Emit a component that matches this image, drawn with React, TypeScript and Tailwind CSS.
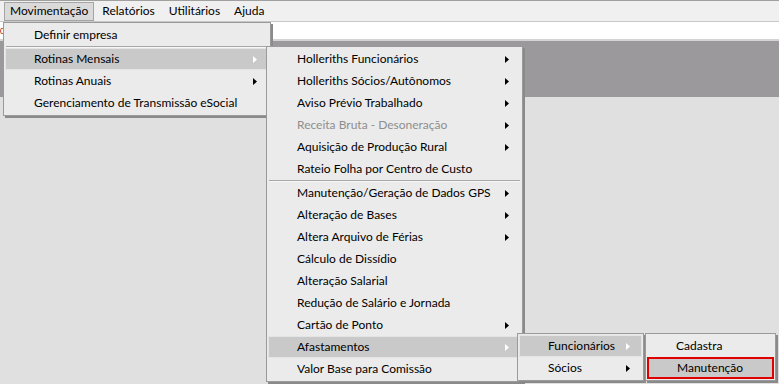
import React from 'react';

type Item = {
  label?: string;
  sub?: boolean;
  active?: boolean;
  disabled?: boolean;
  sep?: boolean;
  marked?: boolean;
};

const Arrow = ({ light }: { light?: boolean }) => (
  <svg width="4" height="7" viewBox="0 0 4 7" className="shrink-0">
    <path d="M0 0 L4 3.5 L0 7 Z" fill={light ? '#ffffff' : '#000000'} />
  </svg>
);

const MenuRow = ({ item }: { item: Item }) => {
  if (item.sep) {
    return <div className="h-[2px] mx-[2px] border-t border-[#a8a8a8] border-b border-b-[#f6f6f6]" />;
  }
  const base = 'flex items-center h-[22px] pl-[28px] pr-[11px] mx-[1px]';
  const look = item.marked
    ? 'bg-[#c9c9c9] border-2 border-[#e00000] pl-[27px]'
    : item.active
    ? 'bg-[#c9c9c9] border border-[#e4e4e4]'
    : 'border border-transparent';
  return (
    <div className={`${base} ${look}`}>
      <span className={`flex-1 whitespace-nowrap ${item.disabled ? 'text-[#8e8e8e]' : 'text-black'}`}>{item.label}</span>
      {item.sub && <Arrow light={item.active} />}
    </div>
  );
};

const Menu = ({ items, className }: { items: Item[]; className: string }) => (
  <div
    className={`absolute bg-[#ebebeb] border border-[#9a9a9a] py-[1px] shadow-[2px_2px_0_#8a8a8a] ${className}`}
  >
    {items.map((it, i) => (
      <MenuRow key={i} item={it} />
    ))}
  </div>
);

const topMenus = ['Movimentação', 'Relatórios', 'Utilitários', 'Ajuda'];

export default function App() {
  const menu1: Item[] = [
    { label: 'Definir empresa' },
    { sep: true },
    { label: 'Rotinas Mensais', sub: true, active: true },
    { label: 'Rotinas Anuais', sub: true },
    { label: 'Gerenciamento de Transmissão eSocial' },
  ];
  const menu2: Item[] = [
    { label: 'Holleriths Funcionários', sub: true },
    { label: 'Holleriths Sócios/Autônomos', sub: true },
    { label: 'Aviso Prévio Trabalhado', sub: true },
    { label: 'Receita Bruta - Desoneração', sub: true, disabled: true },
    { label: 'Aquisição de Produção Rural', sub: true },
    { label: 'Rateio Folha por Centro de Custo' },
    { sep: true },
    { label: 'Manutenção/Geração de Dados GPS', sub: true },
    { label: 'Alteração de Bases', sub: true },
    { label: 'Altera Arquivo de Férias', sub: true },
    { label: 'Cálculo de Dissídio' },
    { label: 'Alteração Salarial' },
    { label: 'Redução de Salário e Jornada' },
    { label: 'Cartão de Ponto', sub: true },
    { label: 'Afastamentos', sub: true, active: true },
    { label: 'Valor Base para Comissão' },
  ];
  const menu3: Item[] = [
    { label: 'Funcionários', sub: true, active: true },
    { label: 'Sócios', sub: true },
  ];
  const menu4: Item[] = [{ label: 'Cadastra' }, { label: 'Manutenção', marked: true }];

  return (
    <div
      className="relative w-[779px] h-[384px] overflow-hidden bg-[#e0e0e0] text-[12px] leading-none"
      style={{ fontFamily: 'Lato, "Noto Sans", sans-serif' }}
    >
      {/* menu bar */}
      <div className="h-[22px] bg-[#f0f0f0] border-t border-[#a0a0a0] border-b border-b-[#c8c8c8] flex items-center pl-[4px]">
        {topMenus.map((m, i) => (
          <div
            key={m}
            className={`h-[19px] flex items-center px-[5px] mr-[2px] ${
              i === 0 ? 'bg-[#dadada] border border-[#a5a5a5]' : 'border border-transparent'
            }`}
          >
            {m}
          </div>
        ))}
      </div>
      {/* toolbar strip */}
      <div className="h-[19px] bg-white border-b-2 border-[#d4d4d4] flex items-center">
        <span className="text-[8px] text-[#900000]">0</span>
      </div>
      {/* dark band */}
      <div className="h-[56px] bg-[#9c999c]" />

      <Menu items={menu1} className="left-[3px] top-[22px] w-[268px]" />
      <Menu items={menu2} className="left-[266px] top-[46px] w-[257px]" />
      <Menu items={menu3} className="left-[517px] top-[333px] w-[127px]" />
      <Menu items={menu4} className="left-[645px] top-[333px] w-[131px]" />
    </div>
  );
}
